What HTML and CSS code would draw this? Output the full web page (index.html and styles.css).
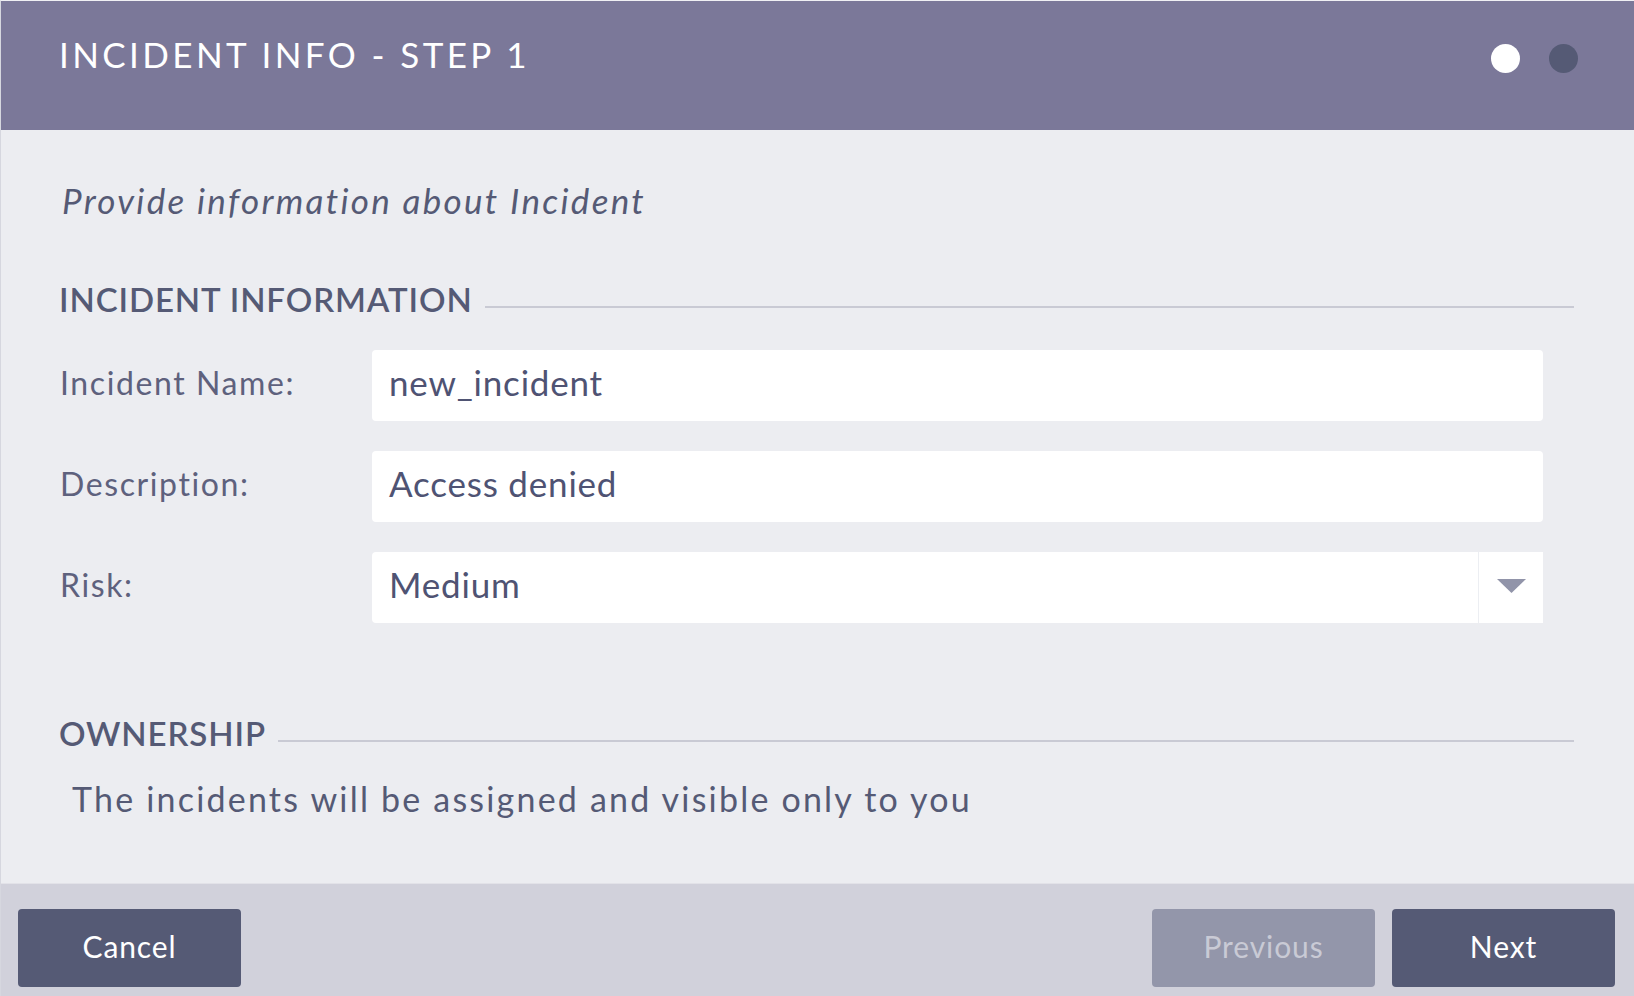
FILE: index.html
```html
<!DOCTYPE html>
<html lang="en">
<head>
<meta charset="utf-8">
<title>Incident Info - Step 1</title>
<link rel="stylesheet" href="styles.css">
</head>
<body>
<div class="dialog">
  <header class="head">
    <h1 class="title">INCIDENT INFO - STEP 1</h1>
    <div class="steps">
      <span class="dot dot-on"></span>
      <span class="dot"></span>
    </div>
  </header>
  <main class="content">
    <p class="intro">Provide information about Incident</p>
    <h2 class="section-title section-first"><span>INCIDENT INFORMATION</span></h2>
    <div class="form">
      <div class="form-row">
        <label class="label">Incident Name:</label>
        <div class="field">new_incident</div>
      </div>
      <div class="form-row">
        <label class="label">Description:</label>
        <div class="field">Access denied</div>
      </div>
      <div class="form-row">
        <label class="label">Risk:</label>
        <div class="field select">
          <span class="select-value">Medium</span>
          <span class="select-arrow">
            <svg width="29" height="14" viewBox="0 0 29 14"><path d="M0 0 H29 L14.5 14 Z" fill="#9194a9"/></svg>
          </span>
        </div>
      </div>
    </div>
    <h2 class="section-title section-second"><span>OWNERSHIP</span></h2>
    <p class="owner-text">The incidents will be assigned and visible only to you</p>
  </main>
  <footer class="foot">
    <button class="btn">Cancel</button>
    <div class="foot-right">
      <button class="btn btn-disabled">Previous</button>
      <button class="btn">Next</button>
    </div>
  </footer>
</div>
</body>
</html>
```
FILE: styles.css
```css
* { box-sizing: border-box; }
html, body { margin: 0; padding: 0; }
body {
  font-family: Lato, "Open Sans", "Liberation Sans", sans-serif;
  background: #f4f4f7;
  width: 1634px;
  height: 996px;
  overflow: hidden;
}
.dialog {
  display: flex;
  flex-direction: column;
  height: 996px;
  border-top: 1px solid #f0f0f4;
  border-left: 1px solid #d6d7df;
  background: #ecedf1;
}
.head {
  height: 129px;
  background: #7b7899;
  display: flex;
  justify-content: space-between;
  align-items: flex-start;
  padding: 0 56px 0 58px;
}
.title {
  margin: 0;
  padding-top: 32px;
  font-size: 35px;
  line-height: 42px;
  font-weight: 400;
  letter-spacing: 3.4px;
  color: #ffffff;
}
.steps {
  display: flex;
  gap: 29px;
  margin-top: 43px;
}
.dot {
  width: 29px;
  height: 29px;
  border-radius: 50%;
  background: #555a75;
}
.dot-on { background: #ffffff; }
.content {
  flex: 1;
  padding: 0 60px 0 58px;
  color: #555a75;
}
.intro {
  margin: 49px 0 0 3px;
  font-size: 35px;
  line-height: 42px;
  font-style: italic;
  letter-spacing: 2.3px;
  color: #555a75;
}
.section-title {
  display: flex;
  align-items: flex-end;
  gap: 12px;
  margin: 0;
  font-size: 33px;
  line-height: 40px;
  font-weight: 600;
  letter-spacing: 0.9px;
  color: #555a75;
}
.section-title::after {
  content: "";
  flex: 1;
  height: 2px;
  background: #c9cad4;
  margin-bottom: 11px;
}
.section-first { margin-top: 58px; }
.section-second { margin-top: 90px; }
.form {
  display: flex;
  flex-direction: column;
  gap: 30px;
  margin-top: 31px;
  padding-right: 31px;
}
.form-row {
  display: flex;
  align-items: center;
}
.label {
  width: 313px;
  flex: none;
  padding: 0 0 5px 1px;
  font-size: 32px;
  line-height: 40px;
  letter-spacing: 1.6px;
  color: #5e617d;
}
.field {
  flex: 1;
  height: 71px;
  background: #ffffff;
  border-radius: 4px;
  display: flex;
  align-items: center;
  padding: 0 0 8px 17px;
  font-size: 35px;
  line-height: 42px;
  letter-spacing: 0.8px;
  color: #4f5373;
}
.select {
  padding: 0;
  border-radius: 4px 0 0 4px;
}
.select-value {
  flex: 1;
  height: 100%;
  display: flex;
  align-items: center;
  padding: 0 0 8px 17px;
  border-right: 1px solid #eceef2;
}
.select-arrow {
  width: 64px;
  height: 100%;
  display: flex;
  align-items: center;
  justify-content: center;
  padding-bottom: 4px;
}
.owner-text {
  margin: 25px 0 0 13px;
  font-size: 34px;
  line-height: 42px;
  letter-spacing: 2.2px;
  color: #555a75;
}
.foot {
  height: 113px;
  background: #d1d1db;
  border-top: 1px solid #e2e2e8;
  display: flex;
  justify-content: space-between;
  align-items: flex-start;
  padding: 25px 19px 0 17px;
}
.foot-right {
  display: flex;
  gap: 17px;
}
.btn {
  width: 223px;
  height: 78px;
  border: none;
  border-radius: 4px;
  background: #555a75;
  color: #ffffff;
  font-family: Lato, "Open Sans", "Liberation Sans", sans-serif;
  font-size: 30px;
  line-height: 36px;
  letter-spacing: 0.9px;
  padding: 0 0 4px;
}
.btn-disabled {
  background: #9396aa;
  color: #c9cad5;
}
```
